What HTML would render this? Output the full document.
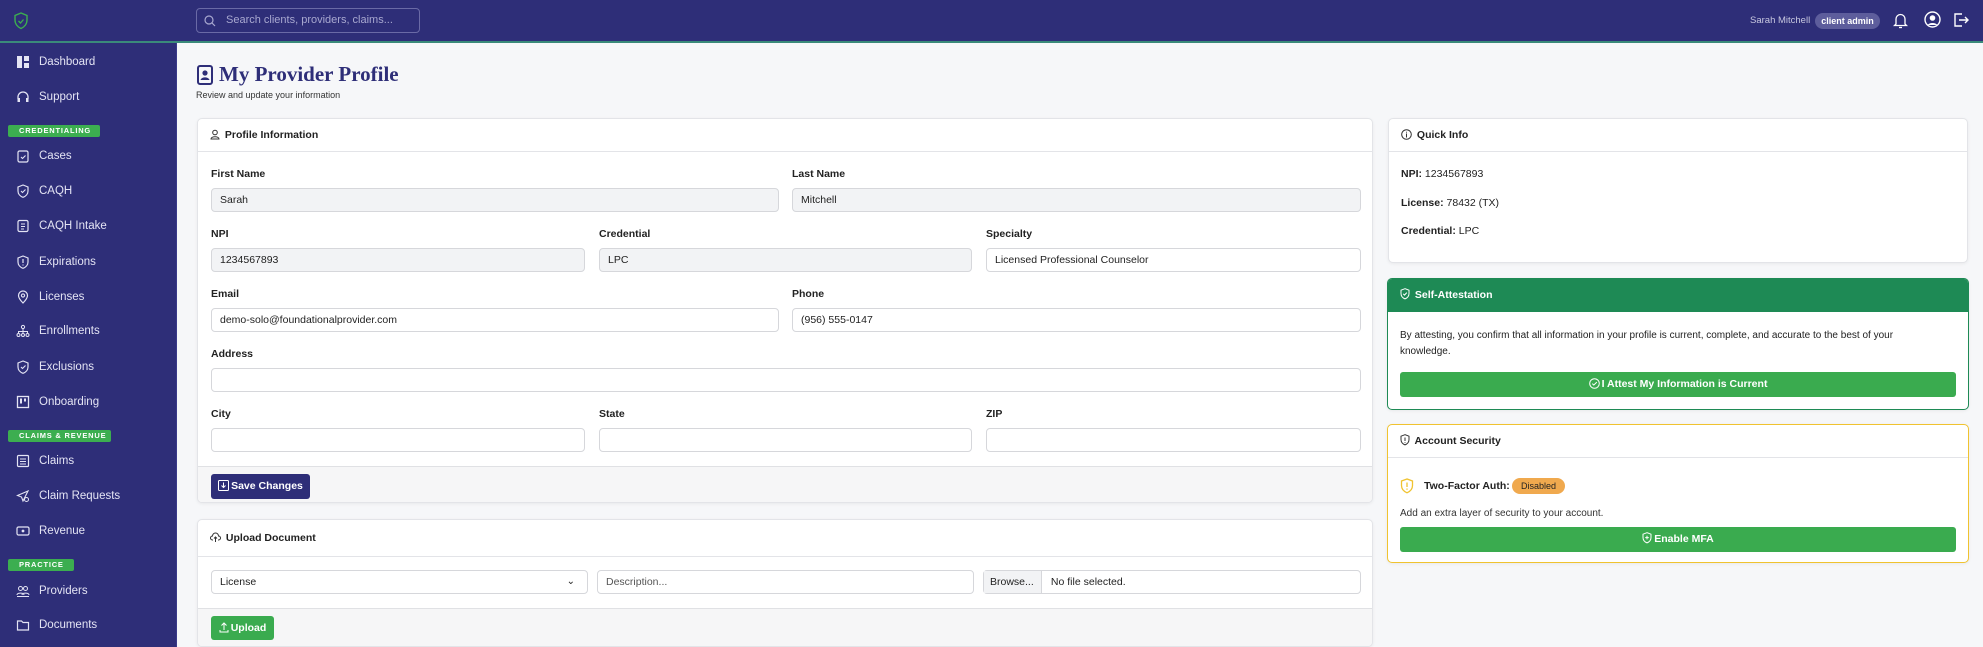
<!DOCTYPE html>
<html><head><meta charset="utf-8"><style>
*{box-sizing:border-box;margin:0;padding:0}
body{width:1983px;height:647px;overflow:hidden;background:#f6f7f9;font-family:"Liberation Sans",sans-serif;color:#222;position:relative}
.a{position:absolute}
#top{left:0;top:0;width:1983px;height:43px;background:#2e2e78;border-bottom:2px solid #3a8a7a}
#side{left:0;top:43px;width:177px;height:604px;background:#2e2e78;border-right:1px solid #3a3a8a}
.ni{position:absolute;left:0;width:177px;height:20px;color:#e4e4f4;font-size:11.5px;line-height:20px}
.ni span{position:absolute;left:39px}
.ni svg{position:absolute;left:16px;top:3px}
.bd{position:absolute;left:8px;height:12px;background:#3cae50;color:#fff;font-size:7.5px;font-weight:bold;letter-spacing:0.8px;line-height:12px;border-radius:2px;padding-left:11px;white-space:nowrap}
.card{position:absolute;background:#fff;border:1px solid #e3e4e8;border-radius:5px;box-shadow:0 1px 3px rgba(0,0,0,.06);overflow:hidden}
.ch{position:absolute;left:0;right:0;top:0;height:33px;border-bottom:1px solid #e3e4e8;font-size:10.5px;font-weight:bold;line-height:33px;padding-left:12px;white-space:nowrap}
.ch svg{vertical-align:-2px;margin-right:2px}
.lb{position:absolute;font-size:10.5px;font-weight:bold;color:#222}
.in{position:absolute;height:24px;border:1px solid #d6d7db;border-radius:4px;background:#fff;font-size:10.5px;line-height:22px;padding-left:8px;color:#222;white-space:nowrap}
.in.g{background:#f2f3f5}
.btn{position:absolute;border-radius:3px;color:#fff;font-size:10.5px;font-weight:bold;text-align:center;white-space:nowrap}
.btn svg{vertical-align:-2px;margin-right:2px}
</style></head><body>
<div id="top" class="a">
 <svg class="a" style="left:13px;top:12px" width="16" height="18" viewBox="0 0 16 18"><path d="M8 1L2 3.5V8c0 4 2.7 7 6 8.5 3.3-1.5 6-4.5 6-8.5V3.5z" fill="none" stroke="#3cae50" stroke-width="1.4"/><path d="M5.5 9l2 2 3-3.5" fill="none" stroke="#3cae50" stroke-width="1.3"/></svg>
 <div class="a" style="left:196px;top:8px;width:224px;height:25px;border:1px solid #6a6aa6;border-radius:4px;color:#a8a8d0;font-size:11px;line-height:23px;padding-left:29px">Search clients, providers, claims...</div>
 <svg class="a" style="left:204px;top:15px" width="12" height="12" viewBox="0 0 12 12"><circle cx="5" cy="5" r="4" fill="none" stroke="#a8a8d0" stroke-width="1.2"/><path d="M8 8l3 3" stroke="#a8a8d0" stroke-width="1.2"/></svg>
 <div class="a" style="left:1750px;top:15px;font-size:9.5px;color:#c8c8e0">Sarah Mitchell</div>
 <div class="a" style="left:1815px;top:13px;width:65px;height:16px;border-radius:8px;background:#5d5d9c;color:#fff;font-size:9px;font-weight:bold;text-align:center;line-height:16px">client admin</div>
 <svg class="a" style="left:1893px;top:12px" width="15" height="17" viewBox="0 0 15 17"><path d="M3 12V7a4.5 4.5 0 019 0v5l1.5 1.5h-12z" fill="none" stroke="#fff" stroke-width="1.3"/><path d="M6 15.5h3" stroke="#fff" stroke-width="1.3"/></svg>
 <svg class="a" style="left:1924px;top:11px" width="17" height="17" viewBox="0 0 17 17"><circle cx="8.5" cy="8.5" r="7.5" fill="none" stroke="#fff" stroke-width="1.4"/><circle cx="8.5" cy="7" r="2.8" fill="#fff"/><path d="M3.8 14c1.5-2.6 7.9-2.6 9.4 0" fill="#fff"/></svg>
 <svg class="a" style="left:1953px;top:12px" width="16" height="16" viewBox="0 0 16 16"><path d="M9 2H2v12h7" fill="none" stroke="#fff" stroke-width="1.4"/><path d="M6 8h9M12 5l3 3-3 3" fill="none" stroke="#fff" stroke-width="1.4"/></svg>
</div>
<div id="side" class="a">
 <div class="ni" style="top:9px"><svg width="13" height="14"><rect x="1" y="1" width="5" height="12" fill="#e4e4f4"/><rect x="8" y="1" width="5" height="5" fill="#e4e4f4"/><rect x="8" y="8" width="5" height="5" fill="#e4e4f4"/></svg><span>Dashboard</span></div>
 <div class="ni" style="top:44px"><svg width="14" height="14"><path d="M2 9V7a5 5 0 0110 0v2" fill="none" stroke="#e4e4f4" stroke-width="1.3"/><rect x="1.5" y="8" width="2.5" height="4" fill="#e4e4f4"/><rect x="10" y="8" width="2.5" height="4" fill="#e4e4f4"/></svg><span>Support</span></div>
 <div class="bd" style="top:82px;width:92px">CREDENTIALING</div>
 <div class="ni" style="top:103px"><svg width="14" height="14"><rect x="2" y="2" width="10" height="11" rx="1.5" fill="none" stroke="#e4e4f4" stroke-width="1.2"/><path d="M5 8l1.5 1.5 3-3" fill="none" stroke="#e4e4f4" stroke-width="1.1"/></svg><span>Cases</span></div>
 <div class="ni" style="top:138px"><svg width="14" height="14"><path d="M7 1L2 3v4c0 3 2.2 5.3 5 6.3 2.8-1 5-3.3 5-6.3V3z" fill="none" stroke="#e4e4f4" stroke-width="1.2"/><path d="M5 7l1.5 1.5 3-3" fill="none" stroke="#e4e4f4" stroke-width="1.1"/></svg><span>CAQH</span></div>
 <div class="ni" style="top:173px"><svg width="14" height="14"><rect x="2" y="1.5" width="10" height="11" rx="1.5" fill="none" stroke="#e4e4f4" stroke-width="1.2"/><path d="M5 5h4M5 7.5h4M5 10h3" stroke="#e4e4f4" stroke-width="1"/></svg><span>CAQH Intake</span></div>
 <div class="ni" style="top:209px"><svg width="14" height="14"><path d="M7 1L2 3v4c0 3 2.2 5.3 5 6.3 2.8-1 5-3.3 5-6.3V3z" fill="none" stroke="#e4e4f4" stroke-width="1.2"/><path d="M7 4v4M7 9.5v1" stroke="#e4e4f4" stroke-width="1.2"/></svg><span>Expirations</span></div>
 <div class="ni" style="top:244px"><svg width="14" height="14"><path d="M7 13s-4.5-4.5-4.5-7.5a4.5 4.5 0 019 0C11.5 8.5 7 13 7 13z" fill="none" stroke="#e4e4f4" stroke-width="1.2"/><circle cx="7" cy="5.5" r="1.6" fill="none" stroke="#e4e4f4" stroke-width="1.1"/></svg><span>Licenses</span></div>
 <div class="ni" style="top:278px"><svg width="14" height="14"><circle cx="7" cy="3" r="1.6" fill="none" stroke="#e4e4f4"/><circle cx="2.5" cy="11" r="1.5" fill="none" stroke="#e4e4f4"/><circle cx="7" cy="11" r="1.5" fill="none" stroke="#e4e4f4"/><circle cx="11.5" cy="11" r="1.5" fill="none" stroke="#e4e4f4"/><path d="M7 5v4M2.5 9V7.5h9V9" fill="none" stroke="#e4e4f4"/></svg><span>Enrollments</span></div>
 <div class="ni" style="top:314px"><svg width="14" height="14"><path d="M7 1L2 3v4c0 3 2.2 5.3 5 6.3 2.8-1 5-3.3 5-6.3V3z" fill="none" stroke="#e4e4f4" stroke-width="1.2"/><path d="M5 7l1.5 1.5 3-3" fill="none" stroke="#e4e4f4" stroke-width="1.1"/></svg><span>Exclusions</span></div>
 <div class="ni" style="top:349px"><svg width="14" height="14"><rect x="1.5" y="1.5" width="11" height="11" fill="none" stroke="#e4e4f4" stroke-width="1.3"/><rect x="4" y="3.5" width="2" height="5" fill="#e4e4f4"/><rect x="8" y="3.5" width="2" height="3" fill="#e4e4f4"/></svg><span>Onboarding</span></div>
 <div class="bd" style="top:387px;width:103px">CLAIMS &amp; REVENUE</div>
 <div class="ni" style="top:408px"><svg width="14" height="14"><rect x="1.5" y="1.5" width="11" height="11" rx="1" fill="none" stroke="#e4e4f4" stroke-width="1.2"/><path d="M4 5h6M4 7.5h6M4 10h6" stroke="#e4e4f4"/></svg><span>Claims</span></div>
 <div class="ni" style="top:443px"><svg width="14" height="14"><path d="M12 2L1.5 6.5l4 1.5 1.5 4z" fill="none" stroke="#e4e4f4" stroke-width="1.1"/><circle cx="10.5" cy="10.5" r="2" fill="none" stroke="#e4e4f4"/></svg><span>Claim Requests</span></div>
 <div class="ni" style="top:478px"><svg width="14" height="14"><rect x="1" y="3" width="12" height="8" rx="1.5" fill="none" stroke="#e4e4f4" stroke-width="1.2"/><circle cx="7" cy="7" r="1.4" fill="#e4e4f4"/></svg><span>Revenue</span></div>
 <div class="bd" style="top:516px;width:66px">PRACTICE</div>
 <div class="ni" style="top:538px"><svg width="14" height="14"><circle cx="4.5" cy="4.5" r="2" fill="none" stroke="#e4e4f4"/><circle cx="9.5" cy="4.5" r="2" fill="none" stroke="#e4e4f4"/><path d="M1 11c0-2.5 7-2.5 7 0M6 11c0-2.5 7-2.5 7 0M1 12.5h12" fill="none" stroke="#e4e4f4"/></svg><span>Providers</span></div>
 <div class="ni" style="top:572px"><svg width="14" height="14"><path d="M1.5 3h4l1.5 1.5h5.5v7.5h-11z" fill="none" stroke="#e4e4f4" stroke-width="1.2"/></svg><span>Documents</span></div>
</div>

<svg class="a" style="left:197px;top:65px" width="16" height="20" viewBox="0 0 16 20"><rect x="1" y="1" width="14" height="18" rx="2" fill="none" stroke="#2e2e78" stroke-width="2"/><circle cx="8" cy="8" r="2.6" fill="#2e2e78"/><path d="M3.5 15c1-3.5 8-3.5 9 0z" fill="#2e2e78"/></svg>
<div class="a" style="left:219px;top:62px;font-family:'Liberation Serif',serif;font-weight:bold;font-size:21px;color:#2e2e78">My Provider Profile</div>
<div class="a" style="left:196px;top:90px;font-size:9px;color:#333">Review and update your information</div>

<div class="card" style="left:197px;top:118px;width:1176px;height:385px">
 <div class="ch"><svg width="10" height="11" viewBox="0 0 10 11"><circle cx="5" cy="3.5" r="2.3" fill="none" stroke="#333"/><path d="M1 10c0-3 8-3 8 0z" fill="none" stroke="#333"/></svg> Profile Information</div>
 <div class="lb" style="left:13px;top:49px">First Name</div><div class="lb" style="left:594px;top:49px">Last Name</div>
 <div class="in g" style="left:13px;top:69px;width:568px">Sarah</div>
 <div class="in g" style="left:594px;top:69px;width:569px">Mitchell</div>
 <div class="lb" style="left:13px;top:109px">NPI</div><div class="lb" style="left:401px;top:109px">Credential</div><div class="lb" style="left:788px;top:109px">Specialty</div>
 <div class="in g" style="left:13px;top:129px;width:374px">1234567893</div>
 <div class="in g" style="left:401px;top:129px;width:373px">LPC</div>
 <div class="in" style="left:788px;top:129px;width:375px">Licensed Professional Counselor</div>
 <div class="lb" style="left:13px;top:169px">Email</div><div class="lb" style="left:594px;top:169px">Phone</div>
 <div class="in" style="left:13px;top:189px;width:568px">demo-solo@foundationalprovider.com</div>
 <div class="in" style="left:594px;top:189px;width:569px">(956) 555-0147</div>
 <div class="lb" style="left:13px;top:229px">Address</div>
 <div class="in" style="left:13px;top:249px;width:1150px"></div>
 <div class="lb" style="left:13px;top:289px">City</div><div class="lb" style="left:401px;top:289px">State</div><div class="lb" style="left:788px;top:289px">ZIP</div>
 <div class="in" style="left:13px;top:309px;width:374px"></div>
 <div class="in" style="left:401px;top:309px;width:373px"></div>
 <div class="in" style="left:788px;top:309px;width:375px"></div>
 <div class="a" style="left:0;top:347px;width:1176px;height:38px;background:#f6f6f7;border-top:1px solid #e0e1e4"></div>
 <div class="btn" style="left:13px;top:355px;width:99px;height:25px;background:#2e2e78;line-height:25px"><svg width="11" height="11" viewBox="0 0 11 11"><rect x="0.5" y="0.5" width="10" height="10" rx="1" fill="none" stroke="#fff"/><path d="M5.5 2.5v5M3.5 5.5l2 2 2-2" fill="none" stroke="#fff"/></svg>Save Changes</div>
</div>

<div class="card" style="left:197px;top:519px;width:1176px;height:128px">
 <div class="ch" style="height:37px;line-height:37px"><svg width="11" height="11" viewBox="0 0 11 11"><path d="M3 8H2.5a2 2 0 010-4 3 3 0 016 0 2 2 0 010 4H8" fill="none" stroke="#333"/><path d="M5.5 10V5M4 6.5l1.5-1.5 1.5 1.5" fill="none" stroke="#333"/></svg> Upload Document</div>
 <div class="in" style="left:13px;top:50px;width:377px">License<span style="position:absolute;right:12px;font-size:10px">&#8964;</span></div>
 <div class="in" style="left:399px;top:50px;width:377px;color:#555">Description...</div>
 <div class="in" style="left:785px;top:50px;width:378px;padding-left:0"><span style="display:inline-block;width:58px;height:22px;background:#f2f3f5;border-right:1px solid #d6d7db;padding-left:6px">Browse...</span> <span style="padding-left:6px">No file selected.</span></div>
 <div class="a" style="left:0;top:88px;width:1176px;height:40px;background:#f6f6f7;border-top:1px solid #e0e1e4"></div>
 <div class="btn" style="left:13px;top:96px;width:63px;height:24px;background:#3aab4f;line-height:24px"><svg width="10" height="11" viewBox="0 0 10 11"><path d="M5 8V1M2.5 3.5L5 1l2.5 2.5M1 8v2h8V8" fill="none" stroke="#fff"/></svg>Upload</div>
</div>

<div class="card" style="left:1388px;top:118px;width:580px;height:145px">
 <div class="ch"><svg width="11" height="11" viewBox="0 0 11 11"><circle cx="5.5" cy="5.5" r="4.8" fill="none" stroke="#333"/><path d="M5.5 4.5v4M5.5 2.8v0.8" stroke="#333"/></svg> Quick Info</div>
 <div class="a" style="left:12px;top:49px;font-size:10.5px"><b>NPI:</b> 1234567893</div>
 <div class="a" style="left:12px;top:78px;font-size:10.5px"><b>License:</b> 78432 (TX)</div>
 <div class="a" style="left:12px;top:106px;font-size:10.5px"><b>Credential:</b> LPC</div>
</div>

<div class="card" style="left:1387px;top:278px;width:582px;height:132px;border:1.5px solid #1e8a55">
 <div class="ch" style="background:#1e8a55;color:#fff;border:none"><svg width="10" height="12" viewBox="0 0 10 12"><path d="M5 .7L1 2.2v3.3c0 2.6 1.8 4.5 4 5.4 2.2-.9 4-2.8 4-5.4V2.2z" fill="none" stroke="#fff"/><path d="M3.2 5.8l1.3 1.3 2.3-2.5" fill="none" stroke="#fff"/></svg> Self-Attestation</div>
 <div class="a" style="left:12px;top:49px;width:525px;font-size:10px;line-height:16px;color:#222">By attesting, you confirm that all information in your profile is current, complete, and accurate to the best of your knowledge.</div>
 <div class="btn" style="left:12px;top:93px;width:556px;height:25px;background:#3aab4f;line-height:25px"><svg width="11" height="11" viewBox="0 0 11 11"><circle cx="5.5" cy="5.5" r="4.8" fill="none" stroke="#fff"/><path d="M3.3 5.6l1.5 1.5 3-3" fill="none" stroke="#fff"/></svg>I Attest My Information is Current</div>
</div>

<div class="card" style="left:1387px;top:424px;width:582px;height:139px;border:1.5px solid #f0c330">
 <div class="ch"><svg width="10" height="12" viewBox="0 0 10 12"><path d="M5 .7L1 2.2v3.3c0 2.6 1.8 4.5 4 5.4 2.2-.9 4-2.8 4-5.4V2.2z" fill="none" stroke="#333"/><path d="M5 3.5v3.5M5 8v.8" stroke="#333"/></svg> Account Security</div>
 <svg class="a" style="left:12px;top:53px" width="14" height="16" viewBox="0 0 14 16"><path d="M7 1L1.5 3v4.5c0 3.5 2.5 6 5.5 7.3 3-1.3 5.5-3.8 5.5-7.3V3z" fill="none" stroke="#f0c330" stroke-width="1.3"/><path d="M7 4.5v4.5M7 10.5v1.2" stroke="#f0c330" stroke-width="1.3"/></svg>
 <div class="a" style="left:36px;top:55px;font-size:10.5px;font-weight:bold;white-space:nowrap">Two-Factor Auth:</div>
 <div class="a" style="left:124px;top:53px;width:53px;height:16px;border-radius:8px;background:#f0a94e;font-size:9px;text-align:center;line-height:16px">Disabled</div>
 <div class="a" style="left:12px;top:83px;font-size:10px;color:#333">Add an extra layer of security to your account.</div>
 <div class="btn" style="left:12px;top:102px;width:556px;height:25px;background:#3aab4f;line-height:25px"><svg width="10" height="12" viewBox="0 0 10 12"><path d="M5 .7L1 2.2v3.3c0 2.6 1.8 4.5 4 5.4 2.2-.9 4-2.8 4-5.4V2.2z" fill="none" stroke="#fff"/><path d="M5 3.8v3.6M3.2 5.6h3.6" stroke="#fff"/></svg>Enable MFA</div>
</div>
</body></html>
